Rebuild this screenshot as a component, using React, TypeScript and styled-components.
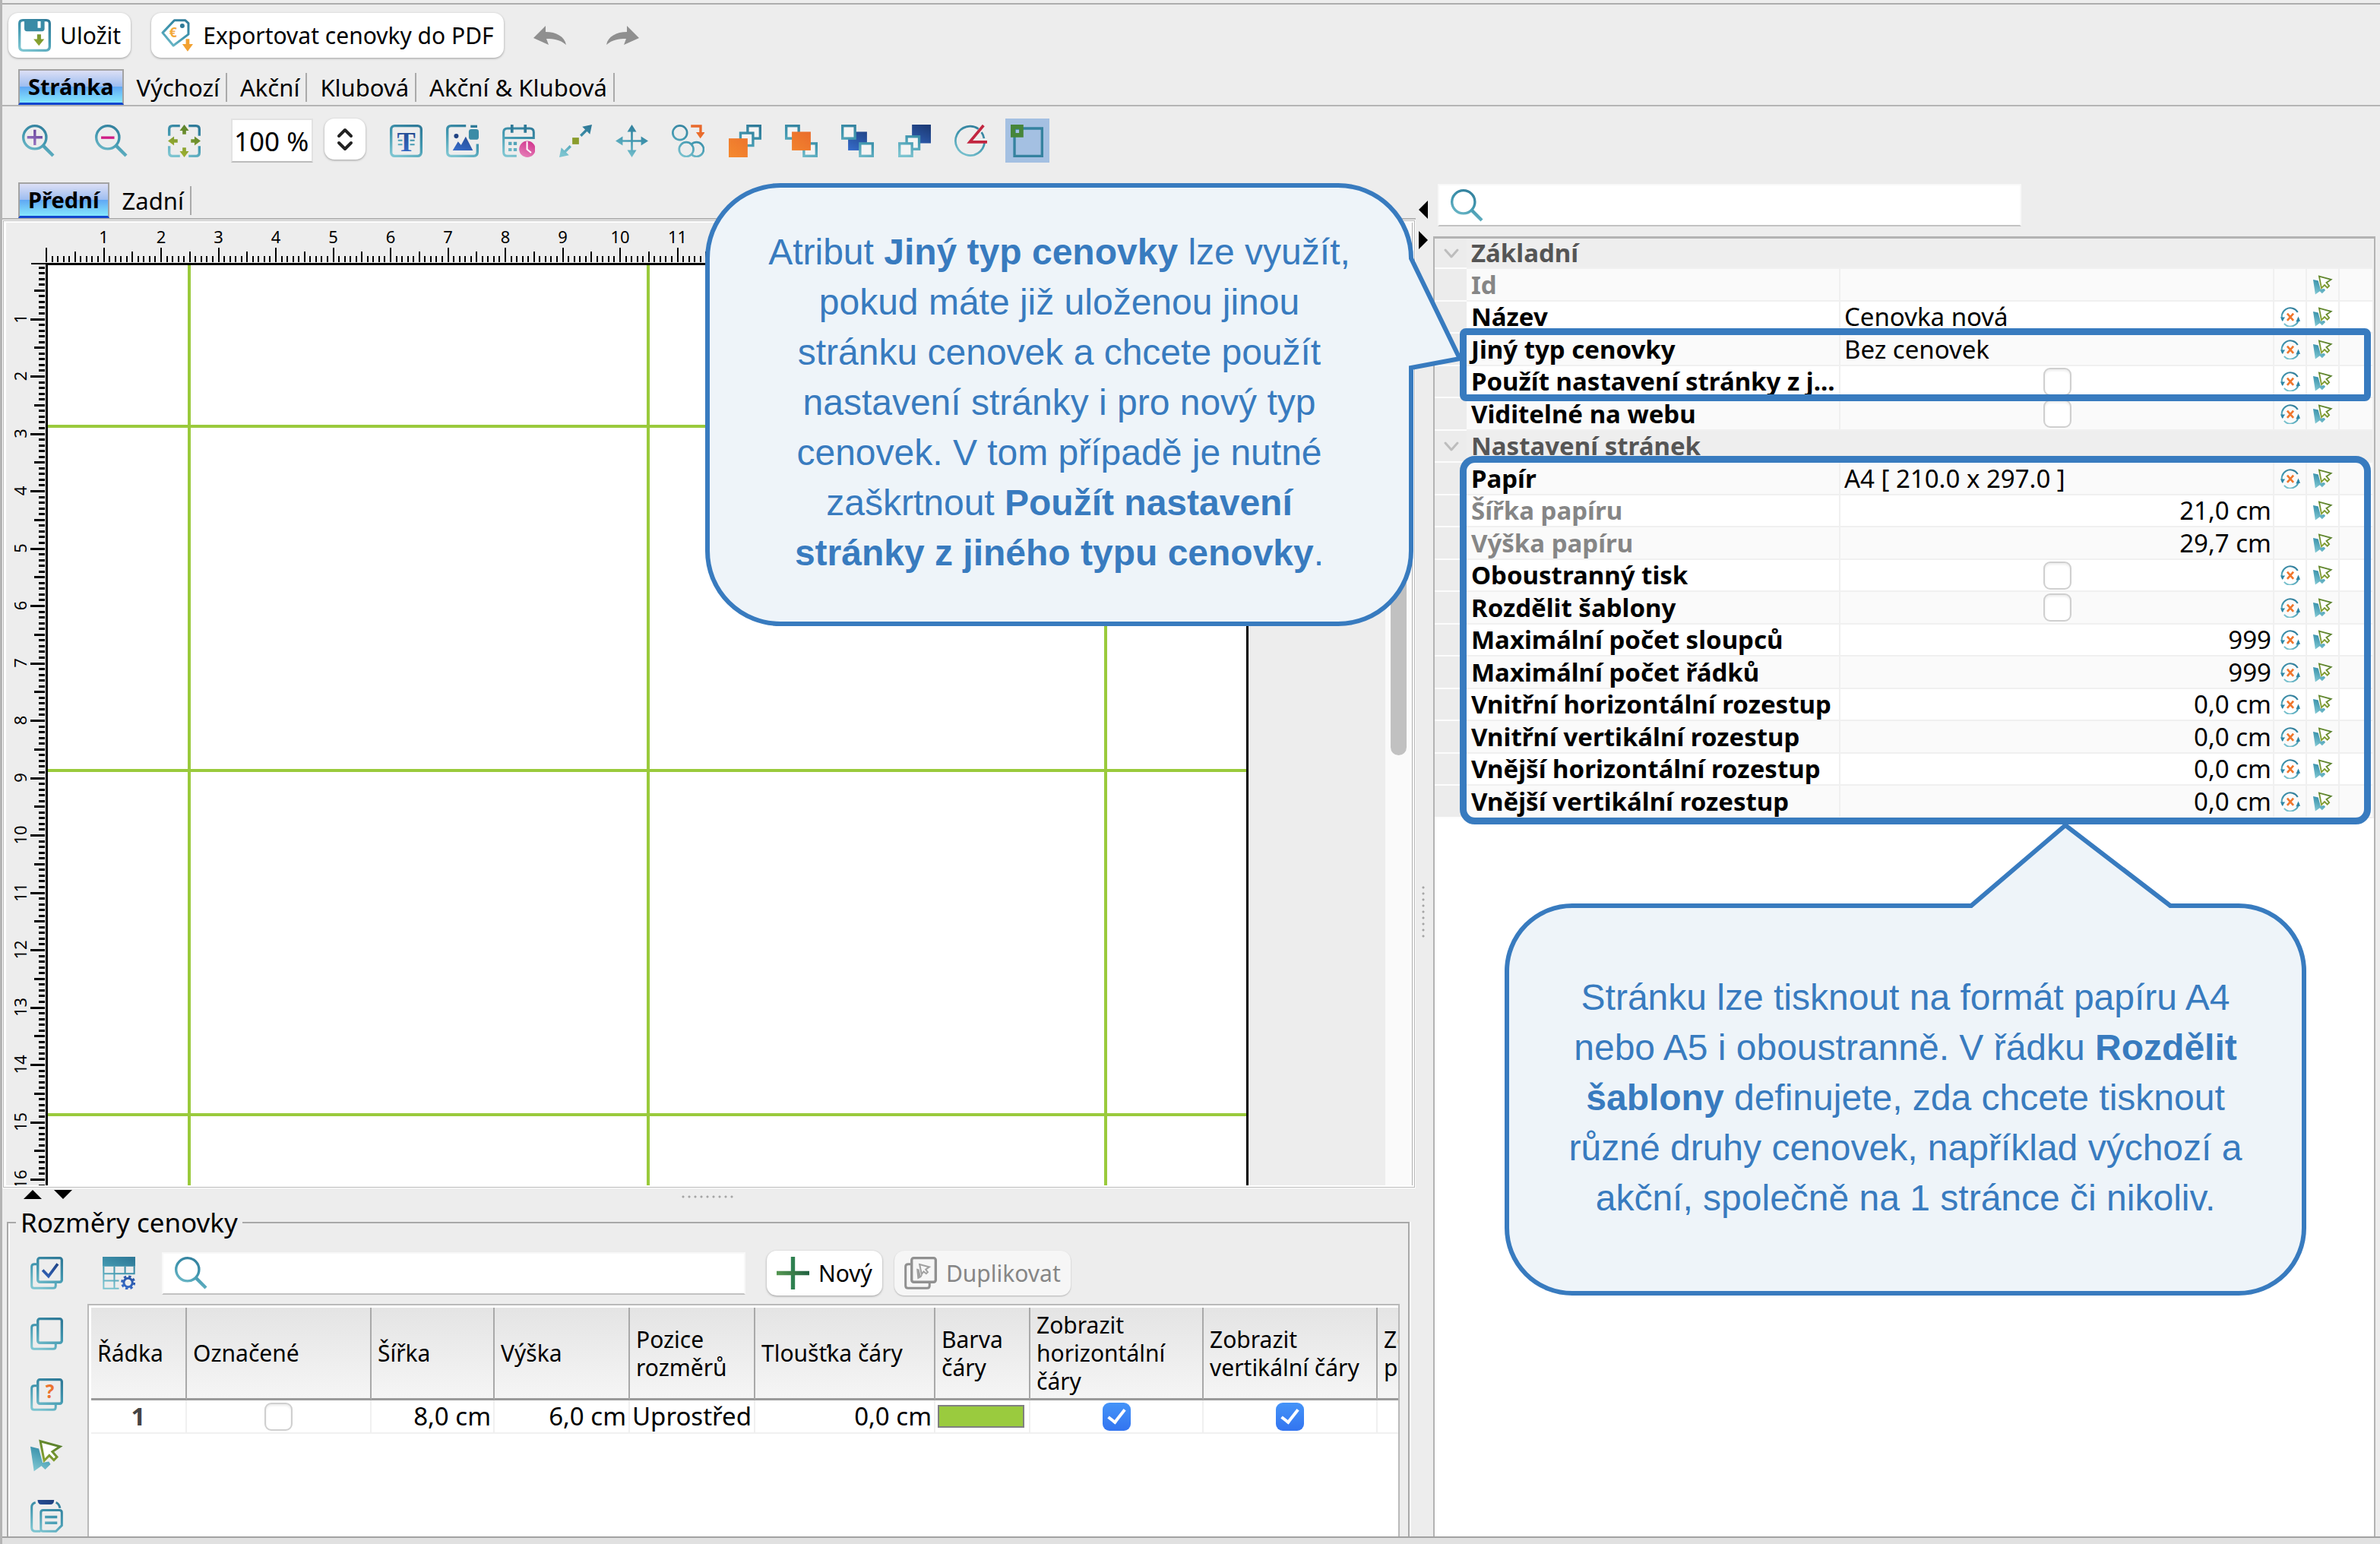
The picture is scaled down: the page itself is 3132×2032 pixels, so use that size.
import React, { useState } from 'react';
import styled, { createGlobalStyle, css } from 'styled-components';

const ui = '"Noto Sans", "Open Sans", sans-serif';
const blue = '#387bbf';

const GlobalStyle = createGlobalStyle`
  *, *::before, *::after { box-sizing: border-box; }
  html, body { margin: 0; height: 100%; }
  body { background: #ededed; color: #000; font-family: ${ui}; font-size: 30px; line-height: 38px; overflow: hidden; }
  button, input { font: inherit; color: inherit; margin: 0; }
  svg { display: block; }
`;

/* ---------- shared parts ---------- */

const Window = styled.div`
  display: flex;
  flex-direction: column;
  height: 100vh;
  padding-top: 4px;
  border-left: 3px solid #b4b4b4;
`;

const TopBar = styled.header`
  display: flex;
  align-items: flex-start;
  gap: 27px;
  height: 87px;
  padding: 11px 8px 0;
  border-top: 2px solid #adadad;
`;

const PushButton = styled.button`
  display: inline-flex;
  align-items: center;
  gap: 12px;
  height: 59px;
  padding: 0 13px;
  border: 0;
  border-radius: 13px;
  background: #fff;
  box-shadow: 0 1px 3px rgba(0, 0, 0, 0.35);
  white-space: nowrap;
  &:disabled { color: #868686; background: #f6f6f6; box-shadow: 0 1px 2px rgba(0, 0, 0, 0.25); }
`;

const GhostButton = styled.button<{ $active?: boolean; $size?: number }>`
  display: grid;
  place-items: center;
  flex: none;
  width: ${(p) => p.$size ?? 58}px;
  height: ${(p) => p.$size ?? 58}px;
  padding: 0;
  border: 0;
  background: ${(p) => (p.$active ? '#a4c0e2' : 'transparent')};
`;

const History = styled.div`
  display: flex;
  gap: 38px;
  padding-left: 5px;
`;

const TabStrip = styled.div`
  display: flex;
  flex: none;
  align-items: flex-end;
  height: 49px;
  padding-left: 21px;
  border-bottom: 2px solid #b5b5b5;
`;

const TabButton = styled.button<{ $active: boolean }>`
  align-self: stretch;
  border: 0;
  background: transparent;
  white-space: nowrap;
  ${(p) =>
    p.$active
      ? css`
          font-size: 29px;
          font-weight: 700;
          padding: 0 11px;
          border: 2px solid #a3a3a3;
          border-bottom: 3px solid #1246cf;
          background: linear-gradient(#dcdff5 0%, #9dbdf0 50%, #60a8f4 51%, #86e8fd 100%);
        `
      : css`
          padding: 0 10px 0 17px;
          font-size: 31px;
          background: linear-gradient(#aaa, #aaa) right center / 2px 38px no-repeat;
        `}
`;

const Tools = styled.div`
  display: flex;
  flex: none;
  align-items: flex-start;
  height: 100px;
  padding: 16px 18px 0;
`;

const ZoomGroup = styled.div`
  display: flex;
  gap: 38px;
`;

const ZoomInput = styled.input`
  width: 108px;
  height: 58px;
  margin-left: 33px;
  padding: 0 2px;
  border: 2px solid #e2e2e2;
  border-bottom-color: #bcbcbc;
  background: #fff;
  font-size: 35px;
`;

const Stepper = styled.div`
  display: grid;
  width: 54px;
  height: 54px;
  margin: 0 24px 0 15px;
  padding: 9px 0;
  border-radius: 13px;
  background: #fff;
  box-shadow: 0 1px 3px rgba(0, 0, 0, 0.35);
`;

const StepButton = styled.button`
  display: grid;
  place-items: center;
  padding: 0;
  border: 0;
  background: transparent;
`;

const ToolGroup = styled.div`
  display: flex;
  justify-content: space-between;
  width: 876px;
`;

const Body = styled.main`
  display: grid;
  flex: 1;
  min-height: 0;
  grid-template-columns: minmax(0, 3fr) 23px minmax(0, 2fr);
  padding-right: 6px;
`;

const LeftPane = styled.section`
  display: flex;
  flex-direction: column;
  min-height: 0;
`;

const CanvasFrame = styled.div`
  display: flex;
  flex: 1;
  min-height: 0;
  border: solid #fff;
  border-width: 4px 4px 4px 5px;
  outline: 1px solid #b9b9b9;
  outline-offset: -2px;
`;

const CanvasArea = styled.div`
  flex: 1;
  min-width: 0;
  overflow: hidden;
`;

const ScrollTrack = styled.div`
  width: 36px;
  padding: 60px 7px 0;
  background: #fafafa;
  border-right: 1px solid #b0b0b0;
`;

const ScrollThumb = styled.div`
  height: 641px;
  border-radius: 11px;
  background: #c1c1c1;
`;

const RowSplitter = styled.div`
  display: grid;
  grid-template-columns: 1fr auto 1fr;
  flex: none;
  height: 26px;
  padding: 2px 28px 0;
`;

const ArrowPair = styled.div<{ $vertical?: boolean }>`
  display: flex;
  flex-direction: ${(p) => (p.$vertical ? 'column' : 'row')};
  gap: 16px;
`;

const ArrowButton = styled.button`
  display: block;
  align-self: flex-start;
  padding: 0;
  border: 0;
  background: transparent;
  line-height: 0;
`;

const Grip = styled.div<{ $vertical?: boolean }>`
  width: ${(p) => (p.$vertical ? '4px' : '72px')};
  height: ${(p) => (p.$vertical ? '72px' : '4px')};
  margin: ${(p) => (p.$vertical ? '0' : '7px 0 0')};
  background: radial-gradient(circle at 2px 2px, #a5a5a5 1px, transparent 2px) 0 0 / ${(p) => (p.$vertical ? '4px 8px' : '8px 4px')};
`;

const ColumnSplitter = styled.div`
  display: flex;
  flex-direction: column;
  align-items: center;
  padding: 24px 3px 0 0;
  ${Grip} { margin-top: 838px; }
`;

const Dimensions = styled.fieldset`
  display: flex;
  flex: none;
  min-width: 0;
  height: 432px;
  margin: 0 8px 0 6px;
  padding: 0 11px 0 0;
  border: 2px solid #a8a8a8;
  border-bottom: 0;
  box-shadow: inset 2px 0 #fff, 2px 0 #fff;
`;

const Legend = styled.legend`
  margin-left: 10px;
  padding: 0 6px;
  font-size: 35px;
  line-height: 38px;
`;

const DimensionsBody = styled.div`
  display: flex;
  height: 394px;
  overflow: hidden;
`;

const SideTools = styled.nav`
  display: flex;
  flex-direction: column;
  gap: 22px;
  flex: none;
  width: 104px;
  padding: 18px 0 0 21px;
`;

const DimensionsMain = styled.div`
  display: flex;
  flex: 1;
  min-width: 0;
  flex-direction: column;
  padding-top: 18px;
`;

const SearchRow = styled.div`
  display: flex;
  align-items: center;
  height: 59px;
  gap: 16px;
  margin-bottom: 11px;
  padding-left: 12px;
`;

const SearchBox = styled.label<{ $inset?: number }>`
  display: flex;
  align-items: center;
  flex: none;
  gap: 12px;
  width: 768px;
  height: 56px;
  margin: 0 ${(p) => p.$inset ?? 0}px;
  padding-left: 15px;
  border: 2px solid #f8f8f8;
  border-bottom-color: #c2c2c2;
  background: #fff;
`;

const SearchInput = styled.input`
  flex: 1;
  min-width: 0;
  height: 48px;
  border: 0;
  outline: 0;
  background: transparent;
`;

const GridFrame = styled.div`
  flex: 1;
  min-height: 0;
  overflow: hidden;
  padding: 3px 0 0 3px;
  border: 2px solid #b9b9b9;
  border-bottom: 0;
  background: #fff;
`;

const DataTable = styled.table`
  width: 1900px;
  table-layout: fixed;
  border-collapse: separate;
  border-spacing: 0;
`;

const HeadCell = styled.th`
  height: 122px;
  padding: 0 0 0 8px;
  border-right: 2px solid #a9a9a9;
  border-bottom: 3px solid #9a9a9a;
  background: linear-gradient(#e4e4e4, #f5f5f5);
  font-size: 30px;
  font-weight: 400;
  line-height: 37px;
  text-align: left;
  white-space: nowrap;
`;

const DataCell = styled.td<{ $align?: string; $bold?: boolean }>`
  height: 44px;
  padding: 0 3px;
  border-right: 2px solid #f0f0f0;
  border-bottom: 2px solid #f0f0f0;
  color: ${(p) => (p.$bold ? '#444' : '#000')};
  font-size: 33px;
  font-weight: ${(p) => (p.$bold ? 700 : 400)};
  line-height: 38px;
  text-align: ${(p) => p.$align ?? 'left'};
  white-space: nowrap;
`;

const Swatch = styled.span`
  display: block;
  width: 114px;
  height: 30px;
  border: 2px solid #808080;
  background: #9acb3e;
`;

const Check = styled.input.attrs({ type: 'checkbox' })`
  appearance: none;
  display: grid;
  place-items: center;
  width: 37px;
  height: 37px;
  margin: 0 auto;
  border: 2px solid #cfcfcf;
  border-radius: 9px;
  background: #fff;
  box-shadow: inset 0 2px 3px rgba(0, 0, 0, 0.08);
  &:checked { border: 0; background: linear-gradient(#4594f8, #3274f0); box-shadow: none; }
  &:checked::after {
    content: '';
    width: 13px;
    height: 23px;
    margin-bottom: 5px;
    border: solid #fff;
    border-width: 0 4px 4px 0;
    transform: rotate(38deg);
  }
`;

const RightPane = styled.section`
  position: relative;
  display: flex;
  flex-direction: column;
  min-height: 0;
  padding-top: 2px;
`;

const PropertyFrame = styled.div`
  flex: 1;
  min-height: 0;
  margin-top: 13px;
  border: solid #b3b3b3;
  border-width: 3px 2px 0;
  background: #fff;
`;

const PropertyTable = styled.table`
  width: 100%;
  table-layout: fixed;
  border-collapse: separate;
  border-spacing: 0;
`;

const PropertyRow = styled.tr<{ $shaded: boolean }>`
  height: 42px;
  background: ${(p) => (p.$shaded ? '#fafafa' : '#fff')};
  &:nth-child(even) { height: 43px; }
`;

const GroupRow = styled.tr`
  height: 42px;
  background: #eee;
  &:first-child { height: 40px; }
`;

const Gutter = styled.td`
  padding: 0 0 0 11px;
  border-bottom: 2px solid #fcfcfc;
  background: #ececec;
`;

const NameCell = styled.th<{ $tone: string }>`
  padding: 0 0 0 6px;
  border-right: 2px solid #f0f0f0;
  border-bottom: 2px solid #f0f0f0;
  color: ${(p) => p.$tone};
  font-size: 33px;
  font-weight: 700;
  line-height: 38px;
  text-align: left;
  white-space: nowrap;
`;

const ValueCell = styled.td<{ $numeric?: boolean }>`
  padding: 0 2px 0 5px;
  border-right: 2px solid #f0f0f0;
  border-bottom: 2px solid #f0f0f0;
  font-size: 33px;
  line-height: 38px;
  text-align: ${(p) => (p.$numeric ? 'right' : 'left')};
  white-space: nowrap;
`;

const ActionCell = styled.td`
  padding: 0 0 0 8px;
  border-right: 2px solid #f0f0f0;
  border-bottom: 2px solid #f0f0f0;
`;

const StatusBar = styled.footer`
  flex: none;
  height: 10px;
  border-top: 2px solid #a2a2a2;
  background: #e1e1e1;
`;

/* ---------- annotations lying over the window ---------- */

const Highlight = styled.div<{ $top: number; $height: number; $radius: number }>`
  position: absolute;
  top: ${(p) => p.$top}px;
  left: 35px;
  right: 6px;
  height: ${(p) => p.$height}px;
  border: 9px solid ${blue};
  border-radius: ${(p) => p.$radius}px;
  pointer-events: none;
`;

const Callout = styled.aside<{ $left: number; $top: number; $width: number; $height: number }>`
  position: absolute;
  left: ${(p) => p.$left}px;
  top: ${(p) => p.$top}px;
  display: grid;
  place-items: center;
  width: ${(p) => p.$width}px;
  height: ${(p) => p.$height}px;
  padding-bottom: 5px;
  z-index: 2;
  color: ${blue};
  font-family: "Liberation Sans", Arial, sans-serif;
  font-size: 48px;
  line-height: 66px;
  text-align: center;
  white-space: nowrap;
`;

const CalloutShape = styled.svg`
  position: absolute;
  left: 0;
  top: 0;
  overflow: visible;
  path { fill: #eef4f9; stroke: ${blue}; stroke-width: 6; }
`;

const CalloutText = styled.p`
  position: relative;
  margin: 0;
`;

/* ---------- icons, drawn on a 128 unit square ---------- */

const T = 'url(#teal)';
const N = 'url(#navy)';

const HiddenDefs = styled.svg`
  position: absolute;
`;

const Gradients = () => (
  <HiddenDefs width="0" height="0" aria-hidden="true">
    <defs>
      <linearGradient id="teal" gradientUnits="userSpaceOnUse" x1="100" y1="0" x2="40" y2="128">
        <stop offset="0" stopColor="#2f7a98" /><stop offset="0.5" stopColor="#4298b0" /><stop offset="1" stopColor="#7cc4d0" />
      </linearGradient>
      <linearGradient id="navy" gradientUnits="userSpaceOnUse" x1="100" y1="0" x2="40" y2="128">
        <stop offset="0" stopColor="#1d3c78" /><stop offset="1" stopColor="#3a74d8" />
      </linearGradient>
      <linearGradient id="leaf" gradientUnits="userSpaceOnUse" x1="100" y1="0" x2="30" y2="128">
        <stop offset="0" stopColor="#4f7a2c" /><stop offset="1" stopColor="#a9b832" />
      </linearGradient>
      <linearGradient id="orange" gradientUnits="userSpaceOnUse" x1="100" y1="0" x2="0" y2="128">
        <stop offset="0" stopColor="#e8682c" /><stop offset="1" stopColor="#f58a2e" />
      </linearGradient>
      <linearGradient id="pink" gradientUnits="userSpaceOnUse" x1="100" y1="30" x2="60" y2="128">
        <stop offset="0" stopColor="#c9177d" /><stop offset="1" stopColor="#e889bd" />
      </linearGradient>
      <linearGradient id="violet" gradientUnits="userSpaceOnUse" x1="70" y1="20" x2="30" y2="80">
        <stop offset="0" stopColor="#5f3c96" /><stop offset="1" stopColor="#a07cc8" />
      </linearGradient>
      <linearGradient id="plus" gradientUnits="userSpaceOnUse" x1="0" y1="128" x2="128" y2="40">
        <stop offset="0" stopColor="#67a957" /><stop offset="1" stopColor="#1b5c40" />
      </linearGradient>
    </defs>
  </HiddenDefs>
);

const Icon = ({ children, size = 43 }: { children: React.ReactNode; size?: number }) => (
  <svg width={size} height={size} viewBox="0 0 128 128" fill="none" aria-hidden="true">{children}</svg>
);

const SaveIcon = () => (
  <Icon>
    <path d="M18 5H110Q123 5 123 18V108Q123 123 108 123H20Q5 123 5 108V18Q5 5 18 5Z" stroke={T} strokeWidth="10" />
    <path d="M24 4H103V38Q103 48 93 48H34Q24 48 24 38Z" fill="#3a8ba6" />
    <path d="M76 9H88V35H76Z" fill="#fff" />
    <path d="M74 60H89V79H102L81 105L60 79H74Z" fill="url(#leaf)" />
  </Icon>
);
const TagIcon = () => (
  <Icon>
    <path d="M52 5H94L107 17V60L48 104L6 54Z" stroke={T} strokeWidth="9" strokeLinejoin="round" />
    <circle cx="83" cy="27" r="9" fill="#2f7a98" />
    <text x="32" y="72" fontSize="52" fontWeight="700" fill="#f3a83a" fontFamily="Noto Sans">€</text>
    <path d="M97 78H111V98H125L104 127L83 98H97Z" fill="#f2a130" />
  </Icon>
);
const Lens = ({ children, size }: { children?: React.ReactNode; size?: number }) => (
  <Icon size={size}>
    <circle cx="50" cy="50" r="45" stroke={T} strokeWidth="10" />
    <path d="M83 83L122 122" stroke={T} strokeWidth="13" />
    {children}
  </Icon>
);
const ZoomInIcon = () => <Lens><path d="M20 50H80M50 20V80" stroke="url(#violet)" strokeWidth="10" /></Lens>;
const ZoomOutIcon = () => <Lens><path d="M24 46H76V56H24Z" fill="#cf1d85" /></Lens>;
const FitIcon = () => (
  <Icon>
    <path d="M47 5H18Q5 5 5 18V44M81 5H110Q123 5 123 18V44M5 84V110Q5 123 18 123H47M81 123H110Q123 123 123 110V84" stroke={T} strokeWidth="10" />
    <path d="M64 0L82 24H71V38H57V24H46ZM64 128L82 104H71V90H57V104H46ZM0 64L24 46V57H38V71H24V82ZM128 64L104 46V57H90V71H104V82Z" fill="url(#leaf)" />
  </Icon>
);
const TextIcon = () => (
  <Icon>
    <rect x="5" y="5" width="118" height="118" rx="14" stroke={T} strokeWidth="10" />
    <path d="M32 62H49M32 78H49M79 62H97M79 78H97" stroke={T} strokeWidth="6" />
    <text x="64" y="103" textAnchor="middle" fontSize="108" fontWeight="700" fill={N} fontFamily="Liberation Serif">T</text>
  </Icon>
);
const ImageIcon = () => (
  <Icon>
    <path d="M78 5H20Q5 5 5 20V108Q5 123 20 123H108Q123 123 123 108V76" stroke={T} strokeWidth="10" />
    <rect x="89" y="18" width="39" height="41" rx="10" fill="#3a8ba6" />
    <path d="M96 2H122V12H96Z" fill="#2f7a98" />
    <circle cx="40" cy="45" r="9" fill="#1f4282" />
    <path d="M26 101L47 66L59 80L77 47L105 101Z" fill={N} />
  </Icon>
);
const CalendarIcon = () => (
  <Icon>
    <path d="M56 123H20Q5 123 5 108V30Q5 15 20 15H108Q123 15 123 30V52H5" stroke={T} strokeWidth="9" />
    <path d="M38 0V32M90 0V32" stroke="#2f7a98" strokeWidth="11" />
    <path d="M24 68H37V80H24ZM44 68H57V80H44ZM24 92H37V104H24ZM44 92H57V104H44Z" fill={T} />
    <circle cx="98" cy="96" r="32" fill="url(#pink)" />
    <path d="M97 66V97L113 110" stroke="#fff" strokeWidth="6" />
  </Icon>
);
const StretchIcon = () => (
  <Icon>
    <path d="M84 44L110 18M44 84L18 110" stroke={T} strokeWidth="10" />
    <path d="M128 0L120 38L90 8ZM0 128L8 90L38 120Z" fill={T} />
    <path d="M51 51H77V77H51Z" fill="#8a9c2c" />
  </Icon>
);
const MoveIcon = () => (
  <Icon>
    <path d="M64 20V108M20 64H108" stroke={T} strokeWidth="8" />
    <path d="M64 0L82 28H46ZM64 128L82 100H46ZM0 64L28 46V82ZM128 64L100 46V82Z" fill={T} />
  </Icon>
);
const CirclesIcon = () => (
  <Icon>
    <circle cx="32" cy="32" r="28" stroke={T} strokeWidth="8" />
    <circle cx="97" cy="97" r="28" stroke={T} strokeWidth="8" />
    <circle cx="57" cy="97" r="28" fill="#ededed" stroke={T} strokeWidth="8" />
    <path d="M75 6H113V32" stroke="url(#orange)" strokeWidth="10" />
    <path d="M95 30H130L112 54Z" fill="url(#orange)" />
  </Icon>
);
const Sheet = ({ x, y }: { x: number; y: number }) => (
  <rect x={x + 5} y={y + 5} width="49" height="49" fill="#f4f4f4" stroke={T} strokeWidth="10" />
);
const FrontIcon = () => <Icon><Sheet x={69} y={0} /><Sheet x={41} y={28} /><path d="M0 54H74V128H0Z" fill="url(#orange)" /></Icon>;
const ForwardIcon = () => <Icon><Sheet x={0} y={0} /><Sheet x={69} y={69} /><path d="M27 28H101V101H27Z" fill="url(#orange)" /></Icon>;
const BackwardIcon = () => <Icon><path d="M27 28H101V101H27Z" fill={N} /><Sheet x={0} y={0} /><Sheet x={69} y={69} /></Icon>;
const BackIcon = () => <Icon><path d="M54 0H128V73H54Z" fill={N} /><Sheet x={28} y={42} /><Sheet x={0} y={69} /></Icon>;
const AngleIcon = () => (
  <Icon>
    <path d="M94 17A57 57 0 1 0 118 70" stroke={T} strokeWidth="8" />
    <path d="M106 30A57 57 0 0 1 116 54" stroke={T} strokeWidth="8" />
    <path d="M114 3L60 68H128" stroke="#c22640" strokeWidth="11" />
  </Icon>
);
const SnapIcon = () => (
  <Icon>
    <path d="M15 15H123V123H15Z" stroke="#35829f" strokeWidth="10" />
    <path d="M0 0H50V50H0ZM18 17V33H33V17Z" fill="#47863a" fillRule="evenodd" />
  </Icon>
);
const Pages = ({ color = T, children }: { color?: string; children?: React.ReactNode }) => (
  <Icon>
    <path d="M24 29H15Q5 29 5 39V113Q5 123 15 123H89Q99 123 99 113V104" stroke={color} strokeWidth="9" />
    <rect x="29" y="5" width="94" height="94" rx="8" stroke={color} strokeWidth="10" />
    {children}
  </Icon>
);
const Cursor = ({ size }: { size?: number }) => (
  <Icon size={size}>
    <path d="M0 29L33 37L48 92L72 88L79 98L58 119L43 105L14 126Z" fill={T} />
    <path d="M39 8L116 29L86 49L104 70L92 82L74 64L54 84Z" fill="#fff" stroke="url(#leaf)" strokeWidth="9" />
  </Icon>
);
const ClipboardIcon = () => (
  <Icon>
    <path d="M20 10Q5 14 5 28V108Q5 123 20 123H40M100 10Q112 14 116 32" stroke={T} strokeWidth="9" />
    <path d="M50 40H114Q123 40 123 49V100L100 123H50Q41 123 41 114V49Q41 40 50 40Z" stroke={T} strokeWidth="9" />
    <path d="M28 0H93Q92 18 78 18H42Q30 18 28 0Z" fill={N} />
    <path d="M57 67H105M57 90H105" stroke={T} strokeWidth="11" />
  </Icon>
);
const TableGearIcon = () => (
  <Icon>
    <path d="M0 0H128V38H0Z" fill={T} />
    <path d="M4 38V124H64M4 66H124V38M4 94H64M46 38V124M88 38V66" stroke={T} strokeWidth="6" />
    <circle cx="100" cy="101" r="24" stroke={N} strokeWidth="9" strokeDasharray="10 9" />
    <circle cx="100" cy="101" r="17" stroke={N} strokeWidth="9" />
  </Icon>
);
const PlusIcon = () => <Icon><path d="M56 0H72V128H56Z" fill="#2f8050" /><path d="M0 56H128V72H0Z" fill="url(#plus)" /></Icon>;
const ResetIcon = () => (
  <Icon size={26}>
    <path d="M16 90A54 54 0 0 1 112 34M24 108A54 54 0 0 0 118 76" stroke={T} strokeWidth="10" />
    <path d="M0 66H30L12 92ZM100 96L116 62L128 92Z" fill="#2f86a6" />
    <path d="M44 42L84 88M84 42L44 88" stroke="#f0762c" strokeWidth="13" />
  </Icon>
);
const HistoryIcon = ({ forward }: { forward?: boolean }) => (
  <svg width="43" height="25" viewBox="0 0 43 25" aria-hidden="true">
    <path transform={forward ? 'matrix(-1 0 0 1 43 0)' : undefined} d="M0 16L16 0V8C30 8 41 14 43 25C35 18 27 17 17 17L20 25Z" fill="#8f8f8f" />
  </svg>
);
const Chevron = ({ d, color = '#222', width = 4 }: { d: string; color?: string; width?: number }) => (
  <svg width="22" height="15" viewBox="0 0 22 15" fill="none" aria-hidden="true">
    <path d={d} stroke={color} strokeWidth={width} strokeLinecap="round" strokeLinejoin="round" />
  </svg>
);
const Triangle = ({ d, w, h }: { d: string; w: number; h: number }) => (
  <svg width={w} height={h} aria-hidden="true"><path d={d} fill="#000" /></svg>
);

/* ---------- canvas with rulers ---------- */

const CM = 75.5;
const ticks = Array.from({ length: 210 }, (_, i) => i);

function LabelCanvas() {
  const ox = 53;
  const oy = 52;
  return (
    <svg width="100%" height="100%" role="img" aria-label="Náhled stránky">
      <rect width="100%" height="100%" fill="#ededed" />
      <rect x={ox} y={oy + 3} width="1580" height="100%" fill="#fff" />
      <g fill="#000">
        {ticks.map((i) => {
          const len = i % 10 === 0 ? 19 : i % 5 === 0 ? 14 : 8;
          return <rect key={`h${i}`} x={Math.round(ox + (i * CM) / 10) - 1} y={oy - len} width="2" height={len} />;
        })}
        {ticks.slice(1, 164).map((i) => {
          const len = i % 10 === 0 ? 19 : i % 5 === 0 ? 14 : 8;
          return <rect key={`v${i}`} x={ox - 2 - len} y={Math.round(oy + (i * CM) / 10) - 2} width={len} height="3" />;
        })}
        <rect x={ox - 20} y={oy + 1} width="20" height="2" />
        <rect x={ox - 1} y={oy + 1} width="1581" height="3" />
        <rect x={ox - 1} y={oy + 1} width="3" height="100%" />
        <rect x={ox + 1579} y={oy + 1} width="3" height="100%" />
      </g>
      <g fill="#000" fontFamily="Noto Sans" fontSize="22" textAnchor="middle">
        {ticks.slice(1, 12).map((n) => <text key={n} x={ox + n * CM} y={oy - 25}>{n}</text>)}
        {ticks.slice(1, 17).map((n) => (
          <text key={n} transform={`translate(27 ${oy + n * CM - 1}) rotate(-90)`}>{n}</text>
        ))}
      </g>
      <g fill="#9aca3c">
        {[239, 843, 1445].map((x) => <rect key={x} x={x} y={oy + 4} width="4" height="100%" />)}
        {[266, 719, 1172].map((y) => <rect key={y} x={ox + 2} y={y} width="1577" height="4" />)}
      </g>
    </svg>
  );
}

/* ---------- property sheet ---------- */

type Property = { name: string; value?: string; kind?: 'text' | 'number' | 'check'; readOnly?: boolean };

const groups: { title: string; rows: Property[] }[] = [
  {
    title: 'Základní',
    rows: [
      { name: 'Id', readOnly: true },
      { name: 'Název', value: 'Cenovka nová' },
      { name: 'Jiný typ cenovky', value: 'Bez cenovek' },
      { name: 'Použít nastavení stránky z j...', kind: 'check' },
      { name: 'Viditelné na webu', kind: 'check' },
    ],
  },
  {
    title: 'Nastavení stránek',
    rows: [
      { name: 'Papír', value: 'A4 [ 210.0 x 297.0 ]' },
      { name: 'Šířka papíru', value: '21,0 cm', kind: 'number', readOnly: true },
      { name: 'Výška papíru', value: '29,7 cm', kind: 'number', readOnly: true },
      { name: 'Oboustranný tisk', kind: 'check' },
      { name: 'Rozdělit šablony', kind: 'check' },
      { name: 'Maximální počet sloupců', value: '999', kind: 'number' },
      { name: 'Maximální počet řádků', value: '999', kind: 'number' },
      { name: 'Vnitřní horizontální rozestup', value: '0,0 cm', kind: 'number' },
      { name: 'Vnitřní vertikální rozestup', value: '0,0 cm', kind: 'number' },
      { name: 'Vnější horizontální rozestup', value: '0,0 cm', kind: 'number' },
      { name: 'Vnější vertikální rozestup', value: '0,0 cm', kind: 'number' },
    ],
  },
];

function PropertySheet() {
  return (
    <PropertyTable>
      <colgroup>
        <col width="42" /><col width="492" /><col /><col width="43" /><col width="43" /><col width="45" />
      </colgroup>
      <tbody>
        {groups.map((group) => (
          <React.Fragment key={group.title}>
            <GroupRow>
              <Gutter><Chevron d="M3 3L11 12L19 3" color="#bdbdbd" width={3} /></Gutter>
              <NameCell colSpan={5} $tone="#555" scope="rowgroup">{group.title}</NameCell>
            </GroupRow>
            {group.rows.map((row, i) => {
              const id = `${group.title}-${i}`;
              return (
                <PropertyRow key={row.name} $shaded={i % 2 === 0}>
                  <Gutter />
                  <NameCell scope="row" $tone={row.readOnly ? '#868686' : '#000'}>
                    {row.kind === 'check' ? <label htmlFor={id}>{row.name}</label> : row.name}
                  </NameCell>
                  <ValueCell $numeric={row.kind === 'number'}>
                    {row.kind === 'check' ? <Check id={id} /> : row.value}
                  </ValueCell>
                  <ActionCell>
                    {!row.readOnly && <GhostButton $size={26} aria-label="Obnovit výchozí"><ResetIcon /></GhostButton>}
                  </ActionCell>
                  <ActionCell><GhostButton $size={26} aria-label="Vybrat"><Cursor size={26} /></GhostButton></ActionCell>
                  <ActionCell />
                </PropertyRow>
              );
            })}
          </React.Fragment>
        ))}
      </tbody>
    </PropertyTable>
  );
}

/* ---------- dimensions table ---------- */

const columns: [string[], number][] = [
  [['Řádka'], 126], [['Označené'], 243], [['Šířka'], 162], [['Výška'], 178], [['Pozice', 'rozměrů'], 165],
  [['Tloušťka čáry'], 237], [['Barva', 'čáry'], 125], [['Zobrazit', 'horizontální', 'čáry'], 228],
  [['Zobrazit', 'vertikální čáry'], 229], [['Zo', 'p'], 207],
];

function DimensionsTable() {
  const [marked, setMarked] = useState(false);
  const [horizontal, setHorizontal] = useState(true);
  const [vertical, setVertical] = useState(true);
  return (
    <DataTable>
      <colgroup>{columns.map(([lines, width]) => <col key={lines.join()} width={width} />)}</colgroup>
      <thead>
        <tr>
          {columns.map(([lines]) => (
            <HeadCell key={lines.join()} scope="col">
              {lines.map((line, i) => <React.Fragment key={line}>{i > 0 && <br />}{line}</React.Fragment>)}
            </HeadCell>
          ))}
        </tr>
      </thead>
      <tbody>
        <tr>
          <DataCell $align="center" $bold>1</DataCell>
          <DataCell><Check aria-label="Označené" checked={marked} onChange={() => setMarked(!marked)} /></DataCell>
          <DataCell $align="right">8,0 cm</DataCell>
          <DataCell $align="right">6,0 cm</DataCell>
          <DataCell>Uprostřed</DataCell>
          <DataCell $align="right">0,0 cm</DataCell>
          <DataCell><Swatch /></DataCell>
          <DataCell><Check aria-label="Zobrazit horizontální čáry" checked={horizontal} onChange={() => setHorizontal(!horizontal)} /></DataCell>
          <DataCell><Check aria-label="Zobrazit vertikální čáry" checked={vertical} onChange={() => setVertical(!vertical)} /></DataCell>
          <DataCell />
        </tr>
      </tbody>
    </DataTable>
  );
}

/* ---------- page ---------- */

const tools: [string, React.ComponentType][] = [
  ['Text', TextIcon], ['Obrázek', ImageIcon], ['Datum', CalendarIcon], ['Velikost', StretchIcon], ['Posun', MoveIcon],
  ['Kopie', CirclesIcon], ['Zcela dopředu', FrontIcon], ['Dopředu', ForwardIcon], ['Dozadu', BackwardIcon],
  ['Zcela dozadu', BackIcon], ['Úhel', AngleIcon], ['Mřížka', SnapIcon],
];

function Tabs({ names }: { names: string[] }) {
  const [active, setActive] = useState(names[0]);
  return (
    <TabStrip role="tablist">
      {names.map((name) => (
        <TabButton key={name} role="tab" aria-selected={name === active} $active={name === active} onClick={() => setActive(name)}>
          {name}
        </TabButton>
      ))}
    </TabStrip>
  );
}

export default function App() {
  return (
    <Window>
      <GlobalStyle />
      <Gradients />
      <TopBar>
        <PushButton><SaveIcon />Uložit</PushButton>
        <PushButton><TagIcon />Exportovat cenovky do PDF</PushButton>
        <History>
          <GhostButton aria-label="Zpět"><HistoryIcon /></GhostButton>
          <GhostButton aria-label="Vpřed"><HistoryIcon forward /></GhostButton>
        </History>
      </TopBar>
      <Tabs names={['Stránka', 'Výchozí', 'Akční', 'Klubová', 'Akční & Klubová']} />
      <Tools>
        <ZoomGroup>
          <GhostButton aria-label="Přiblížit"><ZoomInIcon /></GhostButton>
          <GhostButton aria-label="Oddálit"><ZoomOutIcon /></GhostButton>
          <GhostButton aria-label="Přizpůsobit"><FitIcon /></GhostButton>
        </ZoomGroup>
        <ZoomInput aria-label="Měřítko" defaultValue="100 %" />
        <Stepper>
          <StepButton aria-label="Zvětšit měřítko"><Chevron d="M3 12L11 4L19 12" /></StepButton>
          <StepButton aria-label="Zmenšit měřítko"><Chevron d="M3 3L11 11L19 3" /></StepButton>
        </Stepper>
        <ToolGroup>
          {tools.map(([name, Glyph]) => (
            <GhostButton key={name} aria-label={name} $active={name === 'Mřížka'}><Glyph /></GhostButton>
          ))}
        </ToolGroup>
      </Tools>
      <Body>
        <LeftPane>
          <Tabs names={['Přední', 'Zadní']} />
          <CanvasFrame>
            <CanvasArea><LabelCanvas /></CanvasArea>
            <ScrollTrack><ScrollThumb /></ScrollTrack>
          </CanvasFrame>
          <RowSplitter>
            <ArrowPair>
              <ArrowButton aria-label="Sbalit nahoru"><Triangle w={24} h={12} d="M12 0L24 12H0Z" /></ArrowButton>
              <ArrowButton aria-label="Sbalit dolů"><Triangle w={24} h={12} d="M0 0H24L12 12Z" /></ArrowButton>
            </ArrowPair>
            <Grip />
          </RowSplitter>
          <Dimensions>
            <Legend>Rozměry cenovky</Legend>
            <DimensionsBody>
              <SideTools>
                <GhostButton aria-label="Označit vše"><Pages><path d="M48 52L71 76L107 28" stroke={N} strokeWidth="11" /></Pages></GhostButton>
                <GhostButton aria-label="Zrušit označení"><Pages /></GhostButton>
                <GhostButton aria-label="Označit podle podmínky">
                  <Pages><text x="76" y="78" textAnchor="middle" fontSize="72" fontWeight="700" fill="#ec7430" fontFamily="Noto Sans">?</text></Pages>
                </GhostButton>
                <GhostButton aria-label="Vybrat"><Cursor /></GhostButton>
                <GhostButton aria-label="Vložit"><ClipboardIcon /></GhostButton>
              </SideTools>
              <DimensionsMain>
                <SearchRow>
                  <GhostButton aria-label="Nastavení tabulky"><TableGearIcon /></GhostButton>
                  <SearchBox $inset={12}><Lens /><SearchInput type="search" aria-label="Hledat rozměr" /></SearchBox>
                  <PushButton><PlusIcon />Nový</PushButton>
                  <PushButton disabled>
                    <Pages color="#909090">
                      <path d="M48 46L58 49L64 74L72 70L66 80L52 88Z" fill="#a0a0a0" />
                      <path d="M60 30L98 40L84 50L92 60L86 66L76 58L68 68Z" stroke="#a0a0a0" strokeWidth="6" />
                    </Pages>
                    Duplikovat
                  </PushButton>
                </SearchRow>
                <GridFrame><DimensionsTable /></GridFrame>
              </DimensionsMain>
            </DimensionsBody>
          </Dimensions>
        </LeftPane>
        <ColumnSplitter>
          <ArrowPair $vertical>
            <ArrowButton aria-label="Sbalit vlevo"><Triangle w={12} h={24} d="M12 0V24L0 12Z" /></ArrowButton>
            <ArrowButton aria-label="Sbalit vpravo"><Triangle w={12} h={24} d="M0 0L12 12L0 24Z" /></ArrowButton>
          </ArrowPair>
          <Grip $vertical />
        </ColumnSplitter>
        <RightPane>
          <SearchBox $inset={6}><Lens /><SearchInput type="search" aria-label="Hledat vlastnost" /></SearchBox>
          <PropertyFrame><PropertySheet /></PropertyFrame>
          <Highlight $top={192} $height={96} $radius={8} />
          <Highlight $top={360} $height={485} $radius={20} />
          <Callout $left={-955} $top={4} $width={926} $height={577}>
            <CalloutShape width="926" height="577">
              <path d="M96 0H830A96 96 0 0 1 926 96L990 228L926 240V481A96 96 0 0 1 830 577H96A96 96 0 0 1 0 481V96A96 96 0 0 1 96 0Z" />
            </CalloutShape>
            <CalloutText>
              Atribut <b>Jiný typ cenovky</b> lze využít,<br />pokud máte již uloženou jinou<br />stránku cenovek a chcete použít<br />
              nastavení stránky i pro nový typ<br />cenovek. V tom případě je nutné<br />zaškrtnout <b>Použít nastavení<br />stránky z jiného typu cenovky</b>.
            </CalloutText>
          </Callout>
          <Callout $left={97} $top={952} $width={1049} $height={510}>
            <CalloutShape width="1049" height="510">
              <path d="M86 0H611L735 -106L873 0H963A86 86 0 0 1 1049 86V424A86 86 0 0 1 963 510H86A86 86 0 0 1 0 424V86A86 86 0 0 1 86 0Z" />
            </CalloutShape>
            <CalloutText>
              Stránku lze tisknout na formát papíru A4<br />nebo A5 i oboustranně. V řádku <b>Rozdělit<br />šablony</b> definujete, zda chcete tisknout<br />
              různé druhy cenovek, například výchozí a<br />akční, společně na 1 stránce či nikoliv.
            </CalloutText>
          </Callout>
        </RightPane>
      </Body>
      <StatusBar />
    </Window>
  );
}
